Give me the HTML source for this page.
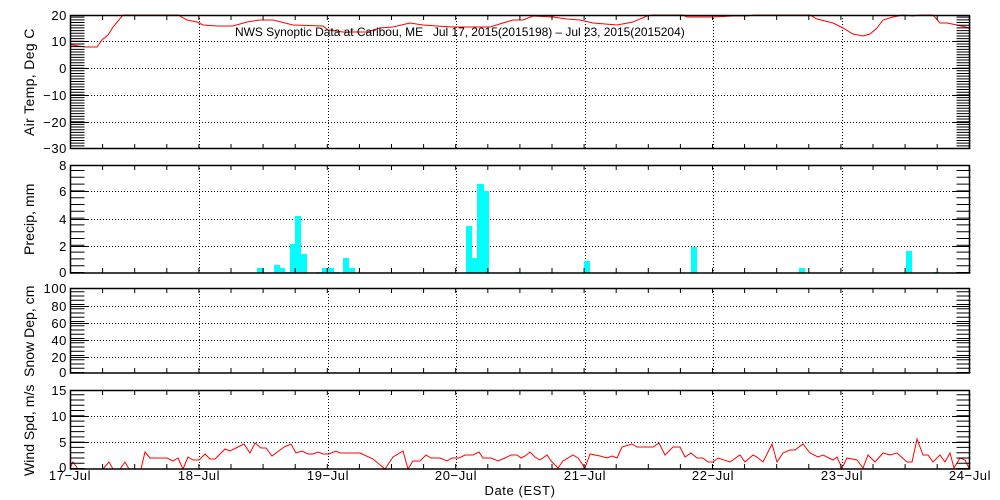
<!DOCTYPE html>
<html><head><meta charset="utf-8"><style>
html,body{margin:0;padding:0;background:#fff;}
svg{display:block;}
text{font-family:"Liberation Sans",sans-serif;font-size:13px;fill:#000;letter-spacing:0.6px;}
.t{white-space:pre;}
</style></head><body>
<svg width="1000" height="500" viewBox="0 0 1000 500" xmlns="http://www.w3.org/2000/svg">
<g stroke="#000" fill="none">
<g stroke-dasharray="1 2" stroke-width="1">
<path d="M199.5 15V149M328.5 15V149M456.5 15V149M585.5 15V149M713.5 15V149M842.5 15V149"/>
<path d="M70 41.5H970M70 68.5H970M70 95.5H970M70 122.5H970"/>
<path d="M199.5 165V273M328.5 165V273M456.5 165V273M585.5 165V273M713.5 165V273M842.5 165V273"/>
<path d="M70 191.5H970M70 219.5H970M70 246.5H970"/>
<path d="M199.5 288V373M328.5 288V373M456.5 288V373M585.5 288V373M713.5 288V373M842.5 288V373"/>
<path d="M70 306.5H970M70 323.5H970M70 340.5H970M70 357.5H970"/>
<path d="M199.5 390V469M328.5 390V469M456.5 390V469M585.5 390V469M713.5 390V469M842.5 390V469"/>
<path d="M70 416.5H970M70 442.5H970"/>
</g>
</g>
<g fill="#00ffff">
<rect x="257" y="268" width="7" height="5"/>
<rect x="274" y="265" width="6" height="8"/>
<rect x="280" y="268" width="5" height="5"/>
<rect x="285" y="272" width="5" height="1"/>
<rect x="290" y="244" width="6" height="29"/>
<rect x="295" y="216" width="6" height="57"/>
<rect x="301" y="254" width="6" height="19"/>
<rect x="316" y="272" width="6" height="1"/>
<rect x="322" y="268" width="12" height="5"/>
<rect x="334" y="272" width="5" height="1"/>
<rect x="343" y="258" width="6" height="15"/>
<rect x="349" y="268" width="6" height="5"/>
<rect x="466" y="226" width="6" height="47"/>
<rect x="472" y="258" width="5" height="15"/>
<rect x="477" y="184" width="7" height="89"/>
<rect x="484" y="191" width="5" height="82"/>
<rect x="515" y="272" width="5" height="1"/>
<rect x="584" y="261" width="6" height="12"/>
<rect x="691" y="247" width="6" height="26"/>
<rect x="799" y="268" width="6" height="5"/>
<rect x="906" y="251" width="6" height="22"/>
<rect x="933" y="272" width="6" height="1"/>
</g>
<polyline fill="none" stroke="#f00" stroke-width="1" points="70,45 72,45 85,47 97,47 102,40 108,35 113,27 123,15 178,15 187,20 197,22 203,25 217,26 233,26 247,22 260,20 273,20 293,25 323,26 328,30 343,32 367,32 380,28 393,27 410,23 423,25 437,26 453,27 490,27 503,23 513,20 523,20 533,16 553,17 567,19 580,20 593,23 617,25 633,22 647,16 652,15 683,15 687,17 713,17 733,16 747,16 755,15 810,15 817,19 833,23 843,28 853,34 863,36 870,34 877,28 883,20 893,17 903,15 913,16 920,15 933,15 940,23 947,23 957,25 970,28"/>
<polyline fill="none" stroke="#f00" stroke-width="1" points="70,468 73,462 78,469 103,469 109,462 113,469 120,469 125,462 129,469 141,469 145,452 150,458 167,458 173,461 178,458 183,469 188,457 193,460 199,460 205,454 210,459 215,459 225,449 230,451 238,447 244,444 250,453 255,443 261,448 266,448 272,456 284,447 291,444 296,453 302,451 308,454 313,454 318,452 323,454 329,454 336,451 340,453 360,453 373,459 385,469 393,457 403,451 408,469 413,461 420,461 426,455 431,458 440,458 447,461 452,458 459,458 465,455 473,455 479,452 483,458 491,458 498,461 505,458 511,455 517,455 521,458 525,456 530,452 535,457 540,460 547,455 552,462 558,468 563,461 573,455 578,458 585,468 590,454 600,456 607,458 612,456 617,458 622,447 632,444 637,447 653,447 659,443 665,455 673,447 680,447 685,457 691,453 697,458 703,458 708,462 713,462 718,458 730,462 740,455 745,462 753,455 757,457 763,462 772,444 777,462 783,453 790,450 795,450 803,444 810,453 818,457 823,455 833,460 837,457 842,468 847,458 857,460 863,468 868,455 875,462 883,453 890,455 897,453 907,462 912,462 917,439 923,455 928,455 933,462 940,455 945,462 950,453 954,468 960,458 965,460 969,468"/>
<g stroke="#000" fill="none">
<rect x="70.5" y="15.5" width="899" height="133" stroke-width="1.5"/>
<rect x="70.5" y="165.5" width="899" height="107.5" stroke-width="1.5"/>
<rect x="70.5" y="288.5" width="899" height="84.5" stroke-width="1.5"/>
<rect x="70.5" y="390.5" width="899" height="78.5" stroke-width="1.5"/>
<path d="M77.5 149V15M963.5 149V15" stroke-width="14" stroke-dasharray="1 1.68"/>
<path d="M77.5 273V165M963.5 273V165" stroke-width="14" stroke-dasharray="1 5.8"/>
<path d="M77.5 373V288M963.5 373V288" stroke-width="14" stroke-dasharray="1 3.25"/>
<path d="M77.5 469V390M963.5 469V390" stroke-width="14" stroke-dasharray="1 4.27"/>
<path d="M70 41.5H88M70 68.5H88M70 95.5H88M70 122.5H88M952 41.5H970M952 68.5H970M952 95.5H970M952 122.5H970"/>
<path d="M70 191.5H88M70 219.5H88M70 246.5H88M952 191.5H970M952 219.5H970M952 246.5H970"/>
<path d="M70 306.5H88M70 323.5H88M70 340.5H88M70 357.5H88M952 306.5H970M952 323.5H970M952 340.5H970M952 357.5H970"/>
<path d="M70 416.5H88M70 442.5H88M952 416.5H970M952 442.5H970"/>
<path d="M70 17.5H970M70 146.5H970M70 167.5H970M70 270.5H970M70 290.5H970M70 370.5H970M70 392.5H970M70 466.5H970" stroke-width="5" stroke-dasharray="1 31.1" stroke-dashoffset="-32.1"/>
</g>
<text class="t" x="235" y="36" style="font-size:12px;letter-spacing:0.3px" textLength="450" lengthAdjust="spacing">NWS Synoptic Data at Caribou, ME   Jul 17, 2015(2015198) – Jul 23, 2015(2015204)</text>
<g text-anchor="end">
<text x="67" y="20">20</text><text x="67" y="46">10</text><text x="67" y="73">0</text>
<text x="67" y="100">−10</text><text x="67" y="127">−20</text><text x="67" y="153">−30</text>
<text x="67" y="170">8</text><text x="67" y="196">6</text><text x="67" y="224">4</text><text x="67" y="251">2</text><text x="67" y="277">0</text>
<text x="67" y="293">100</text><text x="67" y="311">80</text><text x="67" y="328">60</text><text x="67" y="345">40</text><text x="67" y="362">20</text><text x="67" y="377">0</text>
<text x="67" y="395">15</text><text x="67" y="421">10</text><text x="67" y="447">5</text><text x="67" y="472">0</text>
</g>
<g text-anchor="middle">
<text x="70" y="480">17−Jul</text><text x="199" y="480">18−Jul</text><text x="328" y="480">19−Jul</text>
<text x="456" y="480">20−Jul</text><text x="585" y="480">21−Jul</text><text x="713" y="480">22−Jul</text>
<text x="842" y="480">23−Jul</text><text x="970" y="480">24−Jul</text>
<text x="520" y="495">Date (EST)</text>
</g>
<g text-anchor="middle">
<text transform="translate(34,82) rotate(-90)" textLength="108" style="font-size:14px">Air Temp, Deg C</text>
<text transform="translate(34,219) rotate(-90)" textLength="72" style="font-size:14px">Precip, mm</text>
<text transform="translate(34,331) rotate(-90)" textLength="92" style="font-size:14px">Snow Dep, cm</text>
<text transform="translate(34,430) rotate(-90)" textLength="92" style="font-size:14px">Wind Spd, m/s</text>
</g>
</svg>
</body></html>
